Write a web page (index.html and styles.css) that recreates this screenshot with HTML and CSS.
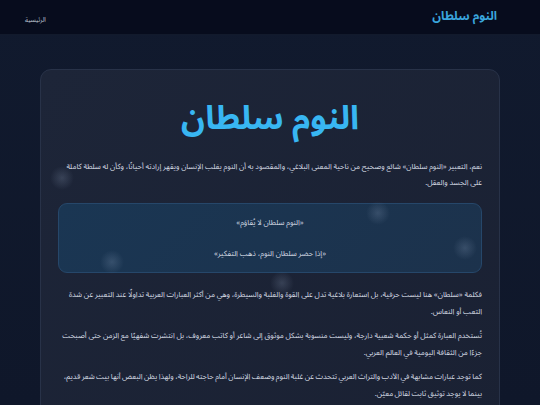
FILE: index.html
```html
<!DOCTYPE html>
<html lang="ar" dir="rtl">
<head>
<meta charset="utf-8">
<title>النوم سلطان</title>
<link rel="stylesheet" href="styles.css">
</head>
<body>
<div class="glow g1"></div>
<div class="glow g2"></div>
<div class="glow g3"></div>
<div class="glow g4"></div>
<div class="glow g5"></div>
<header class="topbar">
  <div class="brand">النوم سلطان</div>
  <nav class="nav"><a href="#">الرئيسية</a></nav>
</header>
<main class="page">
  <article class="card">
    <h1 class="title">النوم سلطان</h1>
    <p class="lead">نعم، التعبير «النوم سلطان» شائع وصحيح من ناحية المعنى البلاغي، والمقصود به أن النوم يغلب الإنسان ويقهر إرادته أحيانًا، وكأن له سلطة كاملة على الجسد والعقل.</p>
    <div class="quotes">
      <p>«النوم سلطان لا يُقاوَم»</p>
      <p>«إذا حضر سلطان النوم، ذهب التفكير»</p>
    </div>
    <p>فكلمة «سلطان» هنا ليست حرفية، بل استعارة بلاغية تدل على القوة والغلبة والسيطرة، وهي من أكثر العبارات العربية تداولًا عند التعبير عن شدة التعب أو النعاس.</p>
    <p>تُستخدم العبارة كمثل أو حكمة شعبية دارجة، وليست منسوبة بشكل موثوق إلى شاعر أو كاتب معروف، بل انتشرت شفهيًا مع الزمن حتى أصبحت جزءًا من الثقافة اليومية في العالم العربي.</p>
    <p class="tight">كما توجد عبارات مشابهة في الأدب والتراث العربي تتحدث عن غلبة النوم وضعف الإنسان أمام حاجته للراحة، ولهذا يظن البعض أنها بيت شعر قديم، بينما لا يوجد توثيق ثابت لقائل معيّن.</p>
  </article>
</main>
</body>
</html>
```
FILE: styles.css
```css
* { box-sizing: border-box; }
html, body { margin: 0; padding: 0; }
body {
  font-family: "Noto Sans Arabic", "DejaVu Sans", "Noto Sans", sans-serif;
  background: linear-gradient(180deg, #111a2e 0%, #0f172a 100%);
  color: #d7dde6;
  height: 405px;
  overflow: hidden;
  position: relative;
}
.topbar {
  height: 35px;
  background: #070c1d;
  display: flex;
  align-items: center;
  justify-content: space-between;
  padding: 0 43px 0 25px;
  border-bottom: 1px solid #121a2c;
}
.brand {
  color: #3aa6dd;
  font-weight: 700;
  font-size: 12px;
  line-height: 16px;
}
.nav a {
  color: #bfc6d2;
  font-size: 6.5px;
  text-decoration: none;
}
.page {
  padding: 34px 40px 0;
}
.card {
  background: linear-gradient(135deg, #1d2538 0%, #1a2133 100%);
  border: 1px solid #283248;
  border-radius: 11px;
  padding: 24px 17px 10px;
  min-height: 380px;
}
.title {
  margin: 0 0 15px;
  text-align: center;
  color: #38b6f2;
  font-size: 33px;
  font-weight: 700;
  line-height: 50px;
}
.card p {
  margin: 0 0 7px;
  font-size: 7.6px;
  word-spacing: -0.2px;
  line-height: 17px;
  text-align: right;
  color: #d3d9e2;
}
.card p.lead { line-height: 16px; margin-bottom: 0; }
.card p.tight { word-spacing: -0.55px; }
.quotes {
  background: linear-gradient(135deg, #1a3653 0%, #1c324c 100%);
  border: 1px solid #26476a;
  border-radius: 9px;
  padding: 10px 10px 9px;
  margin: 12px 0 14px;
}
.card .quotes p {
  text-align: center;
  margin: 0;
  line-height: 18px;
}
.card .quotes p + p { margin-top: 13px; }
.glow {
  position: absolute;
  width: 24px;
  height: 24px;
  border-radius: 50%;
  background: radial-gradient(circle, rgba(180,200,230,0.18) 0%, rgba(180,200,230,0) 70%);
  pointer-events: none;
  z-index: 5;
}
.g1 { left: 50px; top: 166px; }
.g2 { left: 366px; top: 201px; }
.g3 { left: 453px; top: 236px; }
.g4 { left: 100px; top: 250px; }
.g5 { left: 270px; top: 271px; }
```
